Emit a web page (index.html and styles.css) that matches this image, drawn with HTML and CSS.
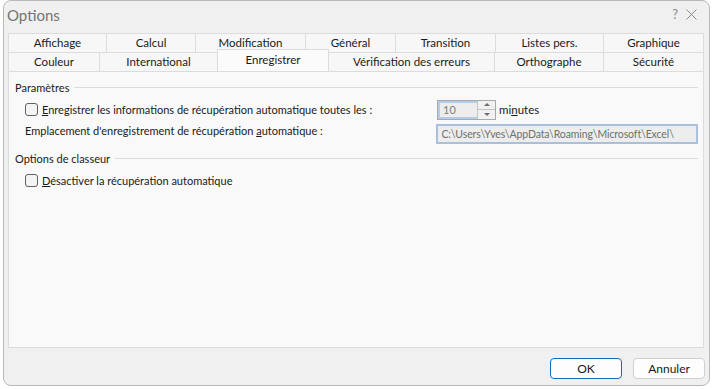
FILE: index.html
```html
<!DOCTYPE html>
<html lang="fr">
<head>
    <meta charset="UTF-8">
    <title>Options</title>
    <link rel="stylesheet" href="styles.css">
</head>
<body>
    <div class="window">
        <div class="titlebar">
            <span class="title">Options</span>
            <span class="help">?</span>
            <span class="close">
                <svg width="11" height="11" viewBox="0 0 11 11"><path d="M0.5 0.5 L10.5 10.5 M10.5 0.5 L0.5 10.5" stroke="#8a8a8a" stroke-width="1" fill="none"/></svg>
            </span>
        </div>

        <div class="tabs">
            <div class="tab-row">
                <div class="tab w98">Affichage</div>
                <div class="tab w89">Calcul</div>
                <div class="tab w110">Modification</div>
                <div class="tab w90">Général</div>
                <div class="tab w100">Transition</div>
                <div class="tab w108">Listes pers.</div>
                <div class="tab w101">Graphique</div>
            </div>
            <div class="tab-row row2">
                <div class="tab w91">Couleur</div>
                <div class="tab w118">International</div>
                <div class="tab w111 active">Enregistrer</div>
                <div class="tab w166">Vérification des erreurs</div>
                <div class="tab w109">Orthographe</div>
                <div class="tab w101">Sécurité</div>
            </div>
        </div>

        <div class="panel">
            <div class="group-title"><span>Paramètres</span></div>
            <div class="row first">
                <label class="check"><span class="box"></span><span><u>E</u>nregistrer les informations de récupération automatique toutes les :</span></label>
                <div class="spin">
                    <div class="spin-value">10</div>
                    <div class="spin-buttons">
                        <span class="arrow up"></span>
                        <span class="arrow down"></span>
                    </div>
                </div>
                <span class="unit">mi<u>n</u>utes</span>
            </div>
            <div class="row location">
                <span class="label">Emplacement d'enregistrement de récupération <u>a</u>utomatique :</span>
                <div class="path">C:\Users\Yves\AppData\Roaming\Microsoft\Excel\</div>
            </div>
            <div class="group-title second"><span>Options de classeur</span></div>
            <div class="row first">
                <label class="check"><span class="box"></span><span><u>D</u>ésactiver la récupération automatique</span></label>
            </div>
        </div>

        <div class="buttons">
            <button class="btn default">OK</button>
            <button class="btn">Annuler</button>
        </div>
    </div>
</body>
</html>
```

FILE: styles.css
```css
body {
    margin: 0;
    background: #fff;
    font-family: Lato, "Noto Sans", sans-serif;
    font-size: 11.5px;
    color: #1a1a1a;
}
.window {
    margin: 0 4px 1px 3px;
    height: 386px;
    box-sizing: border-box;
    background: #f0f0f0;
    border: 1px solid #b9b9b9;
    border-radius: 8px;
    display: flex;
    flex-direction: column;
}
.titlebar {
    height: 30px;
    display: flex;
    align-items: center;
    padding: 0 0 0 3px;
}
.title {
    font-size: 15px;
    color: #747474;
    flex: 1;
    margin-top: -3px;
}
.help {
    font-size: 13px;
    color: #8a8a8a;
    margin-right: 8px;
    margin-top: -4px;
}
.close {
    display: flex;
    margin-right: 12px;
    margin-top: -4px;
}
.tabs {
    margin: 2px 0 0 4px;
    position: relative;
    z-index: 1;
}
.tab-row {
    display: flex;
}
.tab {
    box-sizing: border-box;
    height: 19px;
    line-height: 18px;
    text-align: center;
    background: #f7f7f7;
    border: 1px solid #dcdcdc;
    border-bottom: none;
    margin-right: -1px;
    white-space: nowrap;
}
.tab.active {
    height: 22px;
    margin-top: -3px;
    margin-bottom: -1px;
    background: #fbfbfb;
    line-height: 20px;
    position: relative;
}
.w89 { width: 90px; }
.w90 { width: 91px; }
.w91 { width: 92px; }
.w98 { width: 99px; }
.w100 { width: 101px; }
.w101 { width: 101px; }
.w108 { width: 109px; }
.w109 { width: 110px; }
.w110 { width: 111px; }
.w111 { width: 112px; }
.w118 { width: 119px; }
.w166 { width: 167px; }
.panel {
    margin: 0 5px 0 4px;
    height: 277px;
    box-sizing: border-box;
    background: #f9f9f9;
    border: 1px solid #dcdcdc;
    padding: 7px 5px 0 6px;
    font-size: 11px;
}
.group-title {
    display: flex;
    align-items: center;
    gap: 5px;
    height: 16px;
}
.group-title::after {
    content: "";
    flex: 1;
    border-top: 1px solid #dcdcdc;
}
.group-title.second {
    margin-top: 6px;
}
.row {
    display: flex;
    align-items: center;
    height: 23px;
    padding-left: 10px;
}
.row.first {
    margin-top: 3px;
}
.row.location {
    align-items: flex-end;
}
.check {
    display: flex;
    align-items: center;
    gap: 4px;
    width: 412px;
}
.box {
    width: 11px;
    height: 11px;
    border: 1px solid #616161;
    border-radius: 3px;
    background: #f4f4f4;
}
.label {
    width: 412px;
    align-self: flex-start;
    line-height: 20px;
}
.spin {
    display: flex;
    width: 59px;
    height: 20px;
    box-sizing: border-box;
    border: 1px solid #a9a9a9;
}
.spin-value {
    flex: 1;
    box-sizing: border-box;
    border: 2px solid #b3cce9;
    border-right: none;
    background: #ededed;
    color: #7d7d7d;
    padding-left: 3px;
    line-height: 14px;
}
.spin-buttons {
    width: 17px;
    display: flex;
    flex-direction: column;
    border-left: 1px solid #c4c4c4;
    background: #f1f1f1;
}
.arrow {
    flex: 1;
    display: flex;
    align-items: center;
    justify-content: center;
}
.arrow.up {
    border-bottom: 1px solid #c4c4c4;
}
.arrow::before {
    content: "";
    border-left: 3px solid transparent;
    border-right: 3px solid transparent;
}
.arrow.up::before {
    border-bottom: 3px solid #6d6d6d;
}
.arrow.down::before {
    border-top: 3px solid #6d6d6d;
}
.unit {
    margin-left: 3px;
    font-size: 11.5px;
}
.path {
    width: 262px;
    height: 20px;
    box-sizing: border-box;
    border: 2px solid #a9bfdc;
    background: #ededed;
    color: #707070;
    padding-left: 3px;
    line-height: 16px;
    white-space: nowrap;
    overflow: hidden;
    font-size: 10.5px;
    letter-spacing: -0.1px;
}
.buttons {
    display: flex;
    justify-content: flex-end;
    gap: 11px;
    padding: 10px 4px 0 0;
}
.btn {
    width: 72px;
    height: 21px;
    font-family: inherit;
    font-size: 12px;
    color: #1a1a1a;
    background: #fdfdfd;
    border: 1px solid #d0d0d0;
    border-radius: 4px;
    padding: 0;
}
.btn.default {
    border-color: #0f6cbd;
}
```
